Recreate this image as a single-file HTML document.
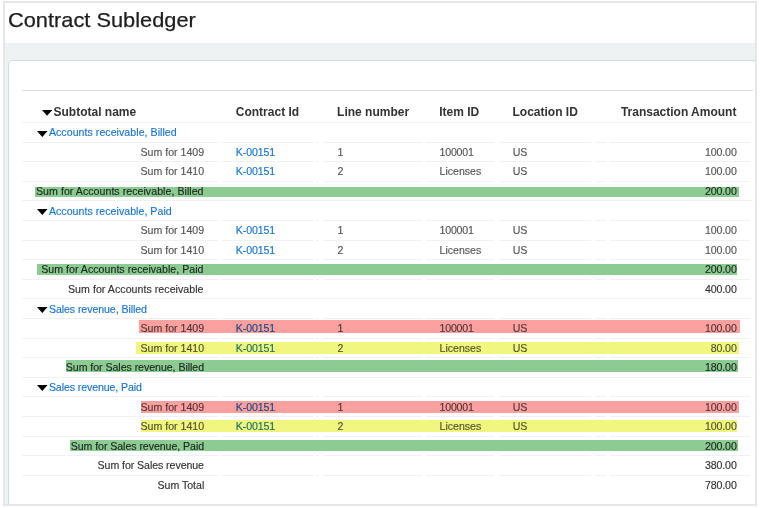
<!DOCTYPE html>
<html><head><meta charset="utf-8"><style>
html,body{margin:0;padding:0;background:#fff;}
body{width:760px;height:508px;position:relative;overflow:hidden;font-family:"Liberation Sans",sans-serif;}
.a{position:absolute;}
.t{position:absolute;line-height:0;white-space:nowrap;-webkit-text-stroke:0.15px currentColor;}
svg{display:block}
</style></head><body>
<div class="a" style="left:3.00px;top:1.00px;width:754.00px;height:505.00px;background:#e6e6e6;"></div>
<div class="a" style="left:5.00px;top:3.00px;width:750.00px;height:501.00px;background:#ffffff;"></div>
<div class="a" style="left:5.00px;top:43.00px;width:750.00px;height:461.00px;background:#eff2f3;"></div>
<div class="a" style="left:8px;top:60px;width:800px;height:500px;background:#fff;border:1px solid #d3dce2;border-radius:4px;box-sizing:border-box"></div>
<div class="a" style="left:755.00px;top:1.00px;width:2.00px;height:505.00px;background:#e6e6e6;"></div>
<div class="a" style="left:757.00px;top:0.00px;width:3.00px;height:508.00px;background:#ffffff;"></div>
<div class="a" style="left:3.00px;top:504.00px;width:754.00px;height:2.00px;background:#e6e6e6;"></div>
<div class="a" style="left:0.00px;top:506.00px;width:760.00px;height:2.00px;background:#ffffff;"></div>
<div class="t" style="left:8.2px;top:19.59px;font-size:20.8px;color:#1e1e1e;transform:scaleX(1.048);transform-origin:0 0;-webkit-text-stroke:0.25px #1e1e1e;">Contract Subledger</div>
<div class="a" style="left:21.80px;top:90.20px;width:731.70px;height:1.00px;background:#d8e0e5;"></div>
<div class="a" style="left:21.80px;top:122.00px;width:731.70px;height:1.00px;background:#eef0f1;"></div>
<svg class="a" style="left:41.80px;top:110.30px" width="10.20" height="5.70" viewBox="0 0 10.20 5.70"><path d="M0 0H10.20L5.10 5.70Z" fill="#000"/></svg>
<div class="t" style="left:53.50px;top:111.84px;font-size:12px;color:#333333;font-weight:700;-webkit-text-stroke:0;">Subtotal name</div>
<div class="t" style="left:235.80px;top:111.84px;font-size:12px;color:#333333;font-weight:700;-webkit-text-stroke:0;">Contract Id</div>
<div class="t" style="left:337.10px;top:111.84px;font-size:12px;color:#333333;font-weight:700;-webkit-text-stroke:0;">Line number</div>
<div class="t" style="left:439.20px;top:111.84px;font-size:12px;color:#333333;font-weight:700;-webkit-text-stroke:0;">Item ID</div>
<div class="t" style="left:512.50px;top:111.84px;font-size:12px;color:#333333;font-weight:700;-webkit-text-stroke:0;">Location ID</div>
<div class="t" style="left:620.89px;top:111.84px;font-size:12px;color:#333333;font-weight:700;-webkit-text-stroke:0;">Transaction Amount</div>
<svg class="a" style="left:37.00px;top:130.65px" width="10.60" height="5.90" viewBox="0 0 10.60 5.90"><path d="M0 0H10.60L5.30 5.90Z" fill="#000"/></svg>
<div class="t" style="left:48.90px;top:132.18px;font-size:10.6px;color:#1b74cc;letter-spacing:0.046px;">Accounts receivable, Billed</div>
<div class="a" style="left:21.80px;top:141.60px;width:196.20px;height:1.00px;background:#eff1f2;"></div>
<div class="a" style="left:222.00px;top:141.60px;width:91.00px;height:1.00px;background:#eff1f2;"></div>
<div class="a" style="left:315.70px;top:141.60px;width:3.30px;height:1.00px;background:#eff1f2;"></div>
<div class="a" style="left:323.00px;top:141.60px;width:98.60px;height:1.00px;background:#eff1f2;"></div>
<div class="a" style="left:426.30px;top:141.60px;width:67.70px;height:1.00px;background:#eff1f2;"></div>
<div class="a" style="left:498.70px;top:141.60px;width:92.10px;height:1.00px;background:#eff1f2;"></div>
<div class="a" style="left:594.70px;top:141.60px;width:11.80px;height:1.00px;background:#eff1f2;"></div>
<div class="a" style="left:609.60px;top:141.60px;width:140.40px;height:1.00px;background:#eff1f2;"></div>
<div class="t" style="left:140.50px;top:151.78px;font-size:10.6px;color:#565656;">Sum for 1409</div>
<div class="t" style="left:235.80px;top:151.78px;font-size:10.6px;color:#1b74cc;letter-spacing:-0.110px;">K-00151</div>
<div class="t" style="left:337.60px;top:151.78px;font-size:10.6px;color:#565656;">1</div>
<div class="t" style="left:439.50px;top:151.78px;font-size:10.6px;color:#565656;letter-spacing:-0.190px;">100001</div>
<div class="t" style="left:512.80px;top:151.78px;font-size:10.6px;color:#565656;letter-spacing:-0.300px;">US</div>
<div class="t" style="left:704.89px;top:151.78px;font-size:10.6px;color:#565656;letter-spacing:-0.100px;">100.00</div>
<div class="a" style="left:21.80px;top:161.20px;width:196.20px;height:1.00px;background:#eff1f2;"></div>
<div class="a" style="left:222.00px;top:161.20px;width:91.00px;height:1.00px;background:#eff1f2;"></div>
<div class="a" style="left:315.70px;top:161.20px;width:3.30px;height:1.00px;background:#eff1f2;"></div>
<div class="a" style="left:323.00px;top:161.20px;width:98.60px;height:1.00px;background:#eff1f2;"></div>
<div class="a" style="left:426.30px;top:161.20px;width:67.70px;height:1.00px;background:#eff1f2;"></div>
<div class="a" style="left:498.70px;top:161.20px;width:92.10px;height:1.00px;background:#eff1f2;"></div>
<div class="a" style="left:594.70px;top:161.20px;width:11.80px;height:1.00px;background:#eff1f2;"></div>
<div class="a" style="left:609.60px;top:161.20px;width:140.40px;height:1.00px;background:#eff1f2;"></div>
<div class="t" style="left:140.50px;top:171.38px;font-size:10.6px;color:#565656;">Sum for 1410</div>
<div class="t" style="left:235.80px;top:171.38px;font-size:10.6px;color:#1b74cc;letter-spacing:-0.110px;">K-00151</div>
<div class="t" style="left:337.60px;top:171.38px;font-size:10.6px;color:#565656;">2</div>
<div class="t" style="left:439.50px;top:171.38px;font-size:10.6px;color:#565656;">Licenses</div>
<div class="t" style="left:512.80px;top:171.38px;font-size:10.6px;color:#565656;letter-spacing:-0.300px;">US</div>
<div class="t" style="left:704.89px;top:171.38px;font-size:10.6px;color:#565656;letter-spacing:-0.100px;">100.00</div>
<div class="a" style="left:21.80px;top:180.80px;width:196.20px;height:1.00px;background:#eff1f2;"></div>
<div class="a" style="left:222.00px;top:180.80px;width:91.00px;height:1.00px;background:#eff1f2;"></div>
<div class="a" style="left:315.70px;top:180.80px;width:3.30px;height:1.00px;background:#eff1f2;"></div>
<div class="a" style="left:323.00px;top:180.80px;width:98.60px;height:1.00px;background:#eff1f2;"></div>
<div class="a" style="left:426.30px;top:180.80px;width:67.70px;height:1.00px;background:#eff1f2;"></div>
<div class="a" style="left:498.70px;top:180.80px;width:92.10px;height:1.00px;background:#eff1f2;"></div>
<div class="a" style="left:594.70px;top:180.80px;width:11.80px;height:1.00px;background:#eff1f2;"></div>
<div class="a" style="left:609.60px;top:180.80px;width:140.40px;height:1.00px;background:#eff1f2;"></div>
<div class="t" style="left:36.00px;top:190.98px;font-size:10.6px;color:#333333;letter-spacing:0.043px;">Sum for Accounts receivable, Billed</div>
<div class="t" style="left:704.89px;top:190.98px;font-size:10.6px;color:#333333;letter-spacing:-0.100px;">200.00</div>
<div class="a" style="left:21.80px;top:200.40px;width:731.70px;height:1.00px;background:#eff1f2;"></div>
<svg class="a" style="left:37.00px;top:209.05px" width="10.60" height="5.90" viewBox="0 0 10.60 5.90"><path d="M0 0H10.60L5.30 5.90Z" fill="#000"/></svg>
<div class="t" style="left:48.90px;top:210.58px;font-size:10.6px;color:#1b74cc;letter-spacing:0.037px;">Accounts receivable, Paid</div>
<div class="a" style="left:21.80px;top:220.00px;width:196.20px;height:1.00px;background:#eff1f2;"></div>
<div class="a" style="left:222.00px;top:220.00px;width:91.00px;height:1.00px;background:#eff1f2;"></div>
<div class="a" style="left:315.70px;top:220.00px;width:3.30px;height:1.00px;background:#eff1f2;"></div>
<div class="a" style="left:323.00px;top:220.00px;width:98.60px;height:1.00px;background:#eff1f2;"></div>
<div class="a" style="left:426.30px;top:220.00px;width:67.70px;height:1.00px;background:#eff1f2;"></div>
<div class="a" style="left:498.70px;top:220.00px;width:92.10px;height:1.00px;background:#eff1f2;"></div>
<div class="a" style="left:594.70px;top:220.00px;width:11.80px;height:1.00px;background:#eff1f2;"></div>
<div class="a" style="left:609.60px;top:220.00px;width:140.40px;height:1.00px;background:#eff1f2;"></div>
<div class="t" style="left:140.50px;top:230.18px;font-size:10.6px;color:#565656;">Sum for 1409</div>
<div class="t" style="left:235.80px;top:230.18px;font-size:10.6px;color:#1b74cc;letter-spacing:-0.110px;">K-00151</div>
<div class="t" style="left:337.60px;top:230.18px;font-size:10.6px;color:#565656;">1</div>
<div class="t" style="left:439.50px;top:230.18px;font-size:10.6px;color:#565656;letter-spacing:-0.190px;">100001</div>
<div class="t" style="left:512.80px;top:230.18px;font-size:10.6px;color:#565656;letter-spacing:-0.300px;">US</div>
<div class="t" style="left:704.89px;top:230.18px;font-size:10.6px;color:#565656;letter-spacing:-0.100px;">100.00</div>
<div class="a" style="left:21.80px;top:239.60px;width:196.20px;height:1.00px;background:#eff1f2;"></div>
<div class="a" style="left:222.00px;top:239.60px;width:91.00px;height:1.00px;background:#eff1f2;"></div>
<div class="a" style="left:315.70px;top:239.60px;width:3.30px;height:1.00px;background:#eff1f2;"></div>
<div class="a" style="left:323.00px;top:239.60px;width:98.60px;height:1.00px;background:#eff1f2;"></div>
<div class="a" style="left:426.30px;top:239.60px;width:67.70px;height:1.00px;background:#eff1f2;"></div>
<div class="a" style="left:498.70px;top:239.60px;width:92.10px;height:1.00px;background:#eff1f2;"></div>
<div class="a" style="left:594.70px;top:239.60px;width:11.80px;height:1.00px;background:#eff1f2;"></div>
<div class="a" style="left:609.60px;top:239.60px;width:140.40px;height:1.00px;background:#eff1f2;"></div>
<div class="t" style="left:140.50px;top:249.78px;font-size:10.6px;color:#565656;">Sum for 1410</div>
<div class="t" style="left:235.80px;top:249.78px;font-size:10.6px;color:#1b74cc;letter-spacing:-0.110px;">K-00151</div>
<div class="t" style="left:337.60px;top:249.78px;font-size:10.6px;color:#565656;">2</div>
<div class="t" style="left:439.50px;top:249.78px;font-size:10.6px;color:#565656;">Licenses</div>
<div class="t" style="left:512.80px;top:249.78px;font-size:10.6px;color:#565656;letter-spacing:-0.300px;">US</div>
<div class="t" style="left:704.89px;top:249.78px;font-size:10.6px;color:#565656;letter-spacing:-0.100px;">100.00</div>
<div class="a" style="left:21.80px;top:259.20px;width:196.20px;height:1.00px;background:#eff1f2;"></div>
<div class="a" style="left:222.00px;top:259.20px;width:91.00px;height:1.00px;background:#eff1f2;"></div>
<div class="a" style="left:315.70px;top:259.20px;width:3.30px;height:1.00px;background:#eff1f2;"></div>
<div class="a" style="left:323.00px;top:259.20px;width:98.60px;height:1.00px;background:#eff1f2;"></div>
<div class="a" style="left:426.30px;top:259.20px;width:67.70px;height:1.00px;background:#eff1f2;"></div>
<div class="a" style="left:498.70px;top:259.20px;width:92.10px;height:1.00px;background:#eff1f2;"></div>
<div class="a" style="left:594.70px;top:259.20px;width:11.80px;height:1.00px;background:#eff1f2;"></div>
<div class="a" style="left:609.60px;top:259.20px;width:140.40px;height:1.00px;background:#eff1f2;"></div>
<div class="t" style="left:41.20px;top:269.38px;font-size:10.6px;color:#333333;letter-spacing:0.030px;">Sum for Accounts receivable, Paid</div>
<div class="t" style="left:704.89px;top:269.38px;font-size:10.6px;color:#333333;letter-spacing:-0.100px;">200.00</div>
<div class="a" style="left:21.80px;top:278.80px;width:196.20px;height:1.00px;background:#eff1f2;"></div>
<div class="a" style="left:222.00px;top:278.80px;width:91.00px;height:1.00px;background:#eff1f2;"></div>
<div class="a" style="left:315.70px;top:278.80px;width:3.30px;height:1.00px;background:#eff1f2;"></div>
<div class="a" style="left:323.00px;top:278.80px;width:98.60px;height:1.00px;background:#eff1f2;"></div>
<div class="a" style="left:426.30px;top:278.80px;width:67.70px;height:1.00px;background:#eff1f2;"></div>
<div class="a" style="left:498.70px;top:278.80px;width:92.10px;height:1.00px;background:#eff1f2;"></div>
<div class="a" style="left:594.70px;top:278.80px;width:11.80px;height:1.00px;background:#eff1f2;"></div>
<div class="a" style="left:609.60px;top:278.80px;width:140.40px;height:1.00px;background:#eff1f2;"></div>
<div class="t" style="left:68.00px;top:288.98px;font-size:10.6px;color:#333333;letter-spacing:0.048px;">Sum for Accounts receivable</div>
<div class="t" style="left:704.89px;top:288.98px;font-size:10.6px;color:#333333;letter-spacing:-0.100px;">400.00</div>
<div class="a" style="left:21.80px;top:298.40px;width:731.70px;height:1.00px;background:#eff1f2;"></div>
<svg class="a" style="left:37.00px;top:307.05px" width="10.60" height="5.90" viewBox="0 0 10.60 5.90"><path d="M0 0H10.60L5.30 5.90Z" fill="#000"/></svg>
<div class="t" style="left:48.90px;top:308.58px;font-size:10.6px;color:#1b74cc;letter-spacing:-0.072px;">Sales revenue, Billed</div>
<div class="a" style="left:21.80px;top:318.00px;width:196.20px;height:1.00px;background:#eff1f2;"></div>
<div class="a" style="left:222.00px;top:318.00px;width:91.00px;height:1.00px;background:#eff1f2;"></div>
<div class="a" style="left:315.70px;top:318.00px;width:3.30px;height:1.00px;background:#eff1f2;"></div>
<div class="a" style="left:323.00px;top:318.00px;width:98.60px;height:1.00px;background:#eff1f2;"></div>
<div class="a" style="left:426.30px;top:318.00px;width:67.70px;height:1.00px;background:#eff1f2;"></div>
<div class="a" style="left:498.70px;top:318.00px;width:92.10px;height:1.00px;background:#eff1f2;"></div>
<div class="a" style="left:594.70px;top:318.00px;width:11.80px;height:1.00px;background:#eff1f2;"></div>
<div class="a" style="left:609.60px;top:318.00px;width:140.40px;height:1.00px;background:#eff1f2;"></div>
<div class="t" style="left:140.50px;top:328.18px;font-size:10.6px;color:#565656;">Sum for 1409</div>
<div class="t" style="left:235.80px;top:328.18px;font-size:10.6px;color:#1b74cc;letter-spacing:-0.110px;">K-00151</div>
<div class="t" style="left:337.60px;top:328.18px;font-size:10.6px;color:#565656;">1</div>
<div class="t" style="left:439.50px;top:328.18px;font-size:10.6px;color:#565656;letter-spacing:-0.190px;">100001</div>
<div class="t" style="left:512.80px;top:328.18px;font-size:10.6px;color:#565656;letter-spacing:-0.300px;">US</div>
<div class="t" style="left:704.89px;top:328.18px;font-size:10.6px;color:#565656;letter-spacing:-0.100px;">100.00</div>
<div class="a" style="left:21.80px;top:337.60px;width:196.20px;height:1.00px;background:#eff1f2;"></div>
<div class="a" style="left:222.00px;top:337.60px;width:91.00px;height:1.00px;background:#eff1f2;"></div>
<div class="a" style="left:315.70px;top:337.60px;width:3.30px;height:1.00px;background:#eff1f2;"></div>
<div class="a" style="left:323.00px;top:337.60px;width:98.60px;height:1.00px;background:#eff1f2;"></div>
<div class="a" style="left:426.30px;top:337.60px;width:67.70px;height:1.00px;background:#eff1f2;"></div>
<div class="a" style="left:498.70px;top:337.60px;width:92.10px;height:1.00px;background:#eff1f2;"></div>
<div class="a" style="left:594.70px;top:337.60px;width:11.80px;height:1.00px;background:#eff1f2;"></div>
<div class="a" style="left:609.60px;top:337.60px;width:140.40px;height:1.00px;background:#eff1f2;"></div>
<div class="t" style="left:140.50px;top:347.78px;font-size:10.6px;color:#565656;">Sum for 1410</div>
<div class="t" style="left:235.80px;top:347.78px;font-size:10.6px;color:#1b74cc;letter-spacing:-0.110px;">K-00151</div>
<div class="t" style="left:337.60px;top:347.78px;font-size:10.6px;color:#565656;">2</div>
<div class="t" style="left:439.50px;top:347.78px;font-size:10.6px;color:#565656;">Licenses</div>
<div class="t" style="left:512.80px;top:347.78px;font-size:10.6px;color:#565656;letter-spacing:-0.300px;">US</div>
<div class="t" style="left:710.68px;top:347.78px;font-size:10.6px;color:#565656;letter-spacing:-0.100px;">80.00</div>
<div class="a" style="left:21.80px;top:357.20px;width:196.20px;height:1.00px;background:#eff1f2;"></div>
<div class="a" style="left:222.00px;top:357.20px;width:91.00px;height:1.00px;background:#eff1f2;"></div>
<div class="a" style="left:315.70px;top:357.20px;width:3.30px;height:1.00px;background:#eff1f2;"></div>
<div class="a" style="left:323.00px;top:357.20px;width:98.60px;height:1.00px;background:#eff1f2;"></div>
<div class="a" style="left:426.30px;top:357.20px;width:67.70px;height:1.00px;background:#eff1f2;"></div>
<div class="a" style="left:498.70px;top:357.20px;width:92.10px;height:1.00px;background:#eff1f2;"></div>
<div class="a" style="left:594.70px;top:357.20px;width:11.80px;height:1.00px;background:#eff1f2;"></div>
<div class="a" style="left:609.60px;top:357.20px;width:140.40px;height:1.00px;background:#eff1f2;"></div>
<div class="t" style="left:65.80px;top:367.38px;font-size:10.6px;color:#333333;letter-spacing:-0.045px;">Sum for Sales revenue, Billed</div>
<div class="t" style="left:704.89px;top:367.38px;font-size:10.6px;color:#333333;letter-spacing:-0.100px;">180.00</div>
<div class="a" style="left:21.80px;top:376.80px;width:731.70px;height:1.00px;background:#eff1f2;"></div>
<svg class="a" style="left:37.00px;top:385.45px" width="10.60" height="5.90" viewBox="0 0 10.60 5.90"><path d="M0 0H10.60L5.30 5.90Z" fill="#000"/></svg>
<div class="t" style="left:48.90px;top:386.98px;font-size:10.6px;color:#1b74cc;letter-spacing:-0.096px;">Sales revenue, Paid</div>
<div class="a" style="left:21.80px;top:396.40px;width:196.20px;height:1.00px;background:#eff1f2;"></div>
<div class="a" style="left:222.00px;top:396.40px;width:91.00px;height:1.00px;background:#eff1f2;"></div>
<div class="a" style="left:315.70px;top:396.40px;width:3.30px;height:1.00px;background:#eff1f2;"></div>
<div class="a" style="left:323.00px;top:396.40px;width:98.60px;height:1.00px;background:#eff1f2;"></div>
<div class="a" style="left:426.30px;top:396.40px;width:67.70px;height:1.00px;background:#eff1f2;"></div>
<div class="a" style="left:498.70px;top:396.40px;width:92.10px;height:1.00px;background:#eff1f2;"></div>
<div class="a" style="left:594.70px;top:396.40px;width:11.80px;height:1.00px;background:#eff1f2;"></div>
<div class="a" style="left:609.60px;top:396.40px;width:140.40px;height:1.00px;background:#eff1f2;"></div>
<div class="t" style="left:140.50px;top:406.58px;font-size:10.6px;color:#565656;">Sum for 1409</div>
<div class="t" style="left:235.80px;top:406.58px;font-size:10.6px;color:#1b74cc;letter-spacing:-0.110px;">K-00151</div>
<div class="t" style="left:337.60px;top:406.58px;font-size:10.6px;color:#565656;">1</div>
<div class="t" style="left:439.50px;top:406.58px;font-size:10.6px;color:#565656;letter-spacing:-0.190px;">100001</div>
<div class="t" style="left:512.80px;top:406.58px;font-size:10.6px;color:#565656;letter-spacing:-0.300px;">US</div>
<div class="t" style="left:704.89px;top:406.58px;font-size:10.6px;color:#565656;letter-spacing:-0.100px;">100.00</div>
<div class="a" style="left:21.80px;top:416.00px;width:196.20px;height:1.00px;background:#eff1f2;"></div>
<div class="a" style="left:222.00px;top:416.00px;width:91.00px;height:1.00px;background:#eff1f2;"></div>
<div class="a" style="left:315.70px;top:416.00px;width:3.30px;height:1.00px;background:#eff1f2;"></div>
<div class="a" style="left:323.00px;top:416.00px;width:98.60px;height:1.00px;background:#eff1f2;"></div>
<div class="a" style="left:426.30px;top:416.00px;width:67.70px;height:1.00px;background:#eff1f2;"></div>
<div class="a" style="left:498.70px;top:416.00px;width:92.10px;height:1.00px;background:#eff1f2;"></div>
<div class="a" style="left:594.70px;top:416.00px;width:11.80px;height:1.00px;background:#eff1f2;"></div>
<div class="a" style="left:609.60px;top:416.00px;width:140.40px;height:1.00px;background:#eff1f2;"></div>
<div class="t" style="left:140.50px;top:426.18px;font-size:10.6px;color:#565656;">Sum for 1410</div>
<div class="t" style="left:235.80px;top:426.18px;font-size:10.6px;color:#1b74cc;letter-spacing:-0.110px;">K-00151</div>
<div class="t" style="left:337.60px;top:426.18px;font-size:10.6px;color:#565656;">2</div>
<div class="t" style="left:439.50px;top:426.18px;font-size:10.6px;color:#565656;">Licenses</div>
<div class="t" style="left:512.80px;top:426.18px;font-size:10.6px;color:#565656;letter-spacing:-0.300px;">US</div>
<div class="t" style="left:704.89px;top:426.18px;font-size:10.6px;color:#565656;letter-spacing:-0.100px;">100.00</div>
<div class="a" style="left:21.80px;top:435.60px;width:196.20px;height:1.00px;background:#eff1f2;"></div>
<div class="a" style="left:222.00px;top:435.60px;width:91.00px;height:1.00px;background:#eff1f2;"></div>
<div class="a" style="left:315.70px;top:435.60px;width:3.30px;height:1.00px;background:#eff1f2;"></div>
<div class="a" style="left:323.00px;top:435.60px;width:98.60px;height:1.00px;background:#eff1f2;"></div>
<div class="a" style="left:426.30px;top:435.60px;width:67.70px;height:1.00px;background:#eff1f2;"></div>
<div class="a" style="left:498.70px;top:435.60px;width:92.10px;height:1.00px;background:#eff1f2;"></div>
<div class="a" style="left:594.70px;top:435.60px;width:11.80px;height:1.00px;background:#eff1f2;"></div>
<div class="a" style="left:609.60px;top:435.60px;width:140.40px;height:1.00px;background:#eff1f2;"></div>
<div class="t" style="left:70.70px;top:445.78px;font-size:10.6px;color:#333333;letter-spacing:-0.056px;">Sum for Sales revenue, Paid</div>
<div class="t" style="left:704.89px;top:445.78px;font-size:10.6px;color:#333333;letter-spacing:-0.100px;">200.00</div>
<div class="a" style="left:21.80px;top:455.20px;width:196.20px;height:1.00px;background:#eff1f2;"></div>
<div class="a" style="left:222.00px;top:455.20px;width:91.00px;height:1.00px;background:#eff1f2;"></div>
<div class="a" style="left:315.70px;top:455.20px;width:3.30px;height:1.00px;background:#eff1f2;"></div>
<div class="a" style="left:323.00px;top:455.20px;width:98.60px;height:1.00px;background:#eff1f2;"></div>
<div class="a" style="left:426.30px;top:455.20px;width:67.70px;height:1.00px;background:#eff1f2;"></div>
<div class="a" style="left:498.70px;top:455.20px;width:92.10px;height:1.00px;background:#eff1f2;"></div>
<div class="a" style="left:594.70px;top:455.20px;width:11.80px;height:1.00px;background:#eff1f2;"></div>
<div class="a" style="left:609.60px;top:455.20px;width:140.40px;height:1.00px;background:#eff1f2;"></div>
<div class="t" style="left:97.60px;top:465.38px;font-size:10.6px;color:#333333;letter-spacing:-0.068px;">Sum for Sales revenue</div>
<div class="t" style="left:704.89px;top:465.38px;font-size:10.6px;color:#333333;letter-spacing:-0.100px;">380.00</div>
<div class="a" style="left:21.80px;top:474.80px;width:196.20px;height:1.00px;background:#eff1f2;"></div>
<div class="a" style="left:222.00px;top:474.80px;width:91.00px;height:1.00px;background:#eff1f2;"></div>
<div class="a" style="left:315.70px;top:474.80px;width:3.30px;height:1.00px;background:#eff1f2;"></div>
<div class="a" style="left:323.00px;top:474.80px;width:98.60px;height:1.00px;background:#eff1f2;"></div>
<div class="a" style="left:426.30px;top:474.80px;width:67.70px;height:1.00px;background:#eff1f2;"></div>
<div class="a" style="left:498.70px;top:474.80px;width:92.10px;height:1.00px;background:#eff1f2;"></div>
<div class="a" style="left:594.70px;top:474.80px;width:11.80px;height:1.00px;background:#eff1f2;"></div>
<div class="a" style="left:609.60px;top:474.80px;width:140.40px;height:1.00px;background:#eff1f2;"></div>
<div class="t" style="left:157.50px;top:484.98px;font-size:10.6px;color:#333333;letter-spacing:-0.019px;">Sum Total</div>
<div class="t" style="left:704.89px;top:484.98px;font-size:10.6px;color:#333333;letter-spacing:-0.100px;">780.00</div>
<div class="a" style="left:34.90px;top:187.00px;width:704.10px;height:9.90px;background:#8ccb92;mix-blend-mode:multiply;"></div>
<div class="a" style="left:37.00px;top:264.10px;width:700.10px;height:10.80px;background:#8ccb92;mix-blend-mode:multiply;"></div>
<div class="a" style="left:138.90px;top:320.00px;width:601.10px;height:12.80px;background:#fca0a0;mix-blend-mode:multiply;"></div>
<div class="a" style="left:136.00px;top:342.00px;width:603.00px;height:11.90px;background:#f1f77e;mix-blend-mode:multiply;"></div>
<div class="a" style="left:66.00px;top:360.00px;width:671.90px;height:11.90px;background:#8ccb92;mix-blend-mode:multiply;"></div>
<div class="a" style="left:141.00px;top:401.00px;width:597.90px;height:11.80px;background:#fca0a0;mix-blend-mode:multiply;"></div>
<div class="a" style="left:141.00px;top:420.00px;width:596.00px;height:11.70px;background:#f1f77e;mix-blend-mode:multiply;"></div>
<div class="a" style="left:69.90px;top:440.30px;width:668.10px;height:10.40px;background:#8ccb92;mix-blend-mode:multiply;"></div>
</body></html>
